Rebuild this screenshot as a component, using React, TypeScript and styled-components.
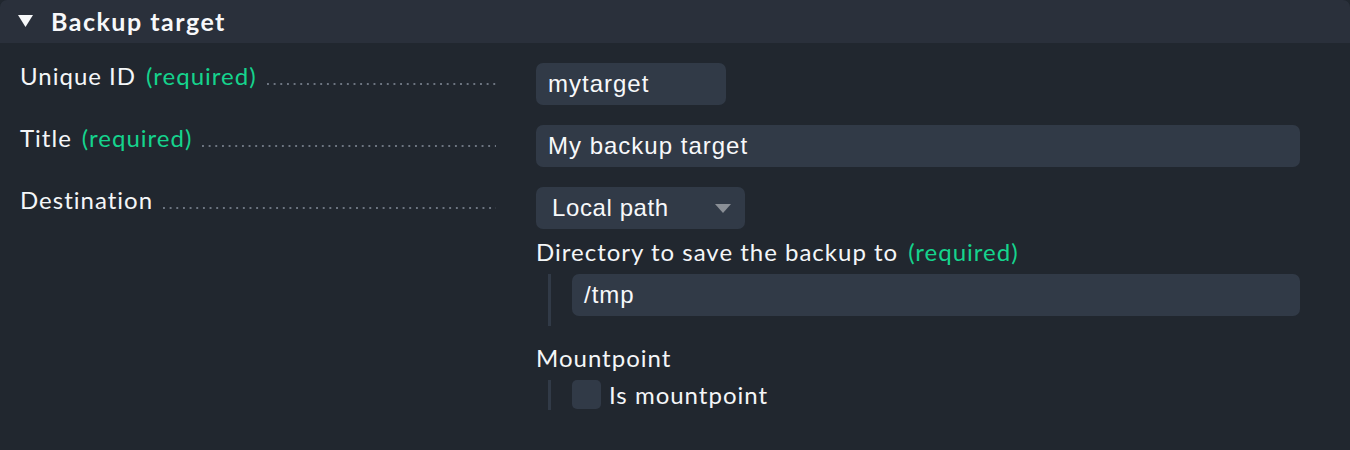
import React from "react";
import styled, { createGlobalStyle } from "styled-components";

const Global = createGlobalStyle`
  html, body { margin: 0; padding: 0; background: #21272f; }
  body { font-family: Lato, "Noto Sans", sans-serif; color: #f4f6f8; }
`;

const Panel = styled.section`
  width: 1350px;
  height: 450px;
  background: #21272f;
  border-radius: 7px 7px 0 0;
  overflow: hidden;
`;

const Header = styled.div`
  height: 43px;
  background: #2a303b;
  display: flex;
  align-items: center;
  padding-left: 18px;
  padding-bottom: 2px;
  gap: 18px;
  box-sizing: border-box;
`;

const HeaderTitle = styled.span`
  font-family: Lato, sans-serif;
  font-weight: 700;
  font-size: 25px;
  letter-spacing: 1.5px;
  color: #f7f8fa;
`;

const Form = styled.div`
  display: grid;
  grid-template-columns: 476px 764px;
  column-gap: 40px;
  row-gap: 20px;
  padding: 20px 50px 0 20px;
`;

const Label = styled.div`
  display: flex;
  align-items: baseline;
  font-size: 24px;
  letter-spacing: 1px;
  line-height: 24px;
  padding-top: 1px;
  white-space: nowrap;
`;

const Required = styled.span`
  color: #15d38d;
  margin-left: 10px;
`;

const Dots = styled.span`
  flex: 1;
  height: 2px;
  margin-left: 10px;
  background-image: linear-gradient(to right, #6d7581 2px, transparent 2px);
  background-size: 6.67px 2px;
  background-repeat: repeat-x;
`;

const Field = styled.div`
  display: flex;
  flex-direction: column;
  align-items: flex-start;
`;

const TextInput = styled.div<{ $width?: string }>`
  box-sizing: border-box;
  width: ${(p) => p.$width || "100%"};
  height: 42px;
  background: #313a47;
  border-radius: 7px;
  display: flex;
  align-items: center;
  padding-left: 12px;
  font-family: "Liberation Sans", Arial, sans-serif;
  font-size: 24px;
  letter-spacing: 1px;
  color: #f7f8fa;
`;

const Select = styled.div`
  box-sizing: border-box;
  width: 209px;
  height: 42px;
  background: #313a47;
  border-radius: 7px;
  display: flex;
  align-items: center;
  justify-content: space-between;
  padding: 0 14px 0 16px;
  font-family: "Liberation Sans", Arial, sans-serif;
  font-size: 24px;
  letter-spacing: 0.6px;
  color: #f7f8fa;
`;

const SubLabel = styled.div<{ $mt: number }>`
  font-size: 24px;
  letter-spacing: 1px;
  line-height: 24px;
  margin-top: ${(p) => p.$mt}px;
  white-space: nowrap;
`;

const Nested = styled.div<{ $pb: number }>`
  align-self: stretch;
  display: flex;
  margin-top: 10px;
  margin-left: 12px;
  padding-left: 21px;
  padding-bottom: ${(p) => p.$pb}px;
  border-left: 3px solid #313a47;
`;

const CheckRow = styled.label`
  display: flex;
  align-items: center;
  gap: 8px;
  font-size: 24px;
  letter-spacing: 1px;
  line-height: 29px;
`;

const CheckBox = styled.span`
  width: 29px;
  height: 29px;
  border-radius: 5px;
  background: #313a47;
`;

export default function App() {
  return (
    <>
      <Global />
      <Panel>
        <Header>
          <svg width="15" height="12" viewBox="0 0 15 12">
            <polygon points="0,0 15,0 7.5,12" fill="#f7f8fa" />
          </svg>
          <HeaderTitle>Backup target</HeaderTitle>
        </Header>
        <Form>
          <Label>
            Unique ID<Required>(required)</Required>
            <Dots />
          </Label>
          <Field>
            <TextInput $width="190px">mytarget</TextInput>
          </Field>

          <Label>
            Title<Required>(required)</Required>
            <Dots />
          </Label>
          <Field>
            <TextInput>My backup target</TextInput>
          </Field>

          <Label>
            Destination
            <Dots />
          </Label>
          <Field>
            <Select>
              <span>Local path</span>
              <svg width="16" height="9" viewBox="0 0 16 9">
                <polygon points="0,0 16,0 8,9" fill="#8a8f96" />
              </svg>
            </Select>
            <SubLabel $mt={11}>
              Directory to save the backup to<Required>(required)</Required>
            </SubLabel>
            <Nested $pb={10}>
              <TextInput>/tmp</TextInput>
            </Nested>
            <SubLabel $mt={20}>Mountpoint</SubLabel>
            <Nested $pb={1}>
              <CheckRow>
                <CheckBox />
                Is mountpoint
              </CheckRow>
            </Nested>
          </Field>
        </Form>
      </Panel>
    </>
  );
}
